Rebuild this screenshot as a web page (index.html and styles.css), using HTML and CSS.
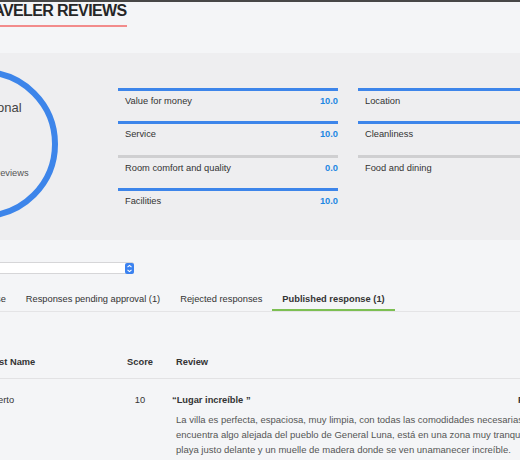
FILE: index.html
```html
<!DOCTYPE html>
<html>
<head>
<meta charset="utf-8">
<title>Traveler reviews</title>
<link rel="stylesheet" href="styles.css">
</head>
<body>
<div class="topbar"></div>
<div class="page">
  <div class="head"><h1 class="title">TRAVELER REVIEWS</h1></div>

  <section class="summary">
    <div class="ring">
      <div class="ring-label">Exceptional</div>
      <div class="ring-score">10</div>
      <div class="ring-count">Based on 1 reviews</div>
    </div>
    <div class="ratings">
      <div class="rating"><span>Value for money</span><b>10.0</b></div>
      <div class="rating"><span>Location</span><b>10.0</b></div>
      <div class="rating"><span>Service</span><b>10.0</b></div>
      <div class="rating"><span>Cleanliness</span><b>10.0</b></div>
      <div class="rating empty"><span>Room comfort and quality</span><b>0.0</b></div>
      <div class="rating empty"><span>Food and dining</span><b>0.0</b></div>
      <div class="rating"><span>Facilities</span><b>10.0</b></div>
    </div>
  </section>

  <div class="filter">
    <div class="select">
      <span class="select-value">All reviews</span>
      <span class="select-btn"><svg width="9" height="11" viewBox="0 0 9 11"><path d="M2.5 4.2 L4.5 2.4 L6.5 4.2 M2.5 6.8 L4.5 8.6 L6.5 6.8" fill="none" stroke="#fff" stroke-width="1.1"/></svg></span>
    </div>
  </div>

  <nav class="tabs">
    <a class="tab">Awaiting response</a>
    <a class="tab">Responses pending approval (1)</a>
    <a class="tab">Rejected responses</a>
    <a class="tab active">Published response (1)</a>
  </nav>

  <div class="reviews">
    <div class="th c-name">Guest Name</div>
    <div class="th c-score">Score</div>
    <div class="th c-review">Review</div>
    <div class="th c-extra"></div>

    <div class="td c-name">Roberto</div>
    <div class="td c-score">10</div>
    <div class="td c-review">
      <div class="review-title">“Lugar increíble ”</div>
      <div class="review-text">La villa es perfecta, espaciosa, muy limpia, con todas las comodidades necesarias. Se<br>encuentra algo alejada del pueblo de General Luna, está en una zona muy tranquila con una<br>playa justo delante y un muelle de madera donde se ven unamanecer increíble.</div>
    </div>
    <div class="td c-extra"><b>Published</b></div>
  </div>
</div>
</body>
</html>
```

FILE: styles.css
```css
html, body {
  margin: 0;
  overflow: hidden;
}
body {
  width: 520px;
  height: 460px;
  background: #f4f5f7;
  font-family: "Liberation Sans", Arial, sans-serif;
  color: #333;
}
.topbar {
  height: 2px;
  background: #474747;
}
.page {
  margin-left: -100px;
  width: 800px;
}
.head {
  padding-left: 73px;
}
.title {
  display: inline-block;
  margin: 0;
  font-size: 16px;
  line-height: 18px;
  font-weight: bold;
  letter-spacing: -0.6px;
  color: #262626;
  padding-bottom: 5px;
  border-bottom: 2px solid #f28b8b;
}
.summary {
  margin-top: 26px;
  height: 187px;
  background: #eeeef0;
  display: flex;
  align-items: flex-start;
  padding-left: 8px;
}
.ring {
  margin-top: 16px;
  width: 150px;
  height: 150px;
  box-sizing: border-box;
  border: 6px solid #3d85ea;
  border-radius: 50%;
  display: flex;
  flex-direction: column;
  align-items: center;
  padding-top: 25px;
  flex-shrink: 0;
}
.ring-label {
  margin-left: 10px;
  font-size: 13px;
  line-height: 16px;
  color: #444;
}
.ring-score {
  margin-top: 5px;
  font-size: 22px;
  line-height: 26px;
  font-weight: bold;
  color: #3d85ea;
}
.ring-count {
  margin-top: 20px;
  margin-left: 10px;
  font-size: 9.3px;
  line-height: 12px;
  color: #555;
}
.ratings {
  margin-left: 60px;
  margin-top: 35px;
  display: grid;
  grid-template-columns: 220px 220px;
  column-gap: 20px;
  row-gap: 14.33px;
}
.rating {
  box-sizing: border-box;
  height: 19px;
  border-top: 3px solid #3d85ea;
  padding: 4px 0 0 7px;
  display: flex;
  justify-content: space-between;
  font-size: 9.3px;
  line-height: 12px;
  color: #333;
}
.rating.empty {
  border-top-color: #cfcfd1;
}
.rating b {
  color: #1f88e3;
}
.filter {
  margin-top: 22px;
}
.select {
  margin-left: 34px;
  width: 200px;
  height: 12px;
  box-sizing: border-box;
  background: #fff;
  border: 1px solid #d6d6d8;
  border-radius: 2px;
  display: flex;
  justify-content: space-between;
  align-items: center;
}
.select-value {
  font-size: 8px;
  padding-left: 4px;
  color: #333;
}
.select-btn {
  width: 9px;
  height: 11px;
  margin-right: -1px;
  background: #3b82f0;
  border-radius: 2px;
  display: flex;
}
.tabs {
  margin-top: 11px;
  display: flex;
  padding-left: 20px;
  border-bottom: 1px solid #e4e4e6;
}
.tab {
  padding: 8px 10px 6px;
  font-size: 9.3px;
  line-height: 12px;
  color: #333;
}
.tab.active {
  font-weight: bold;
  box-shadow: inset 0 -2px 0 #7cbf52;
}
.reviews {
  margin-top: 44px;
  display: grid;
  grid-template-columns: 220px 40px 358px 160px;
  font-size: 9.3px;
  line-height: 12px;
}
.th {
  font-weight: bold;
  color: #333;
  padding-bottom: 10px;
  border-bottom: 1px solid #e2e2e4;
}
.td {
  padding-top: 15px;
  color: #333;
}
.c-name {
  padding-left: 81px;
}
.c-score {
  text-align: center;
}
.c-review {
  padding-left: 16px;
}
.review-title {
  font-weight: bold;
  margin-left: -4px;
}
.review-text {
  margin-top: 5.5px;
  font-size: 9.5px;
  line-height: 15px;
  color: #555;
  white-space: nowrap;
}
```
